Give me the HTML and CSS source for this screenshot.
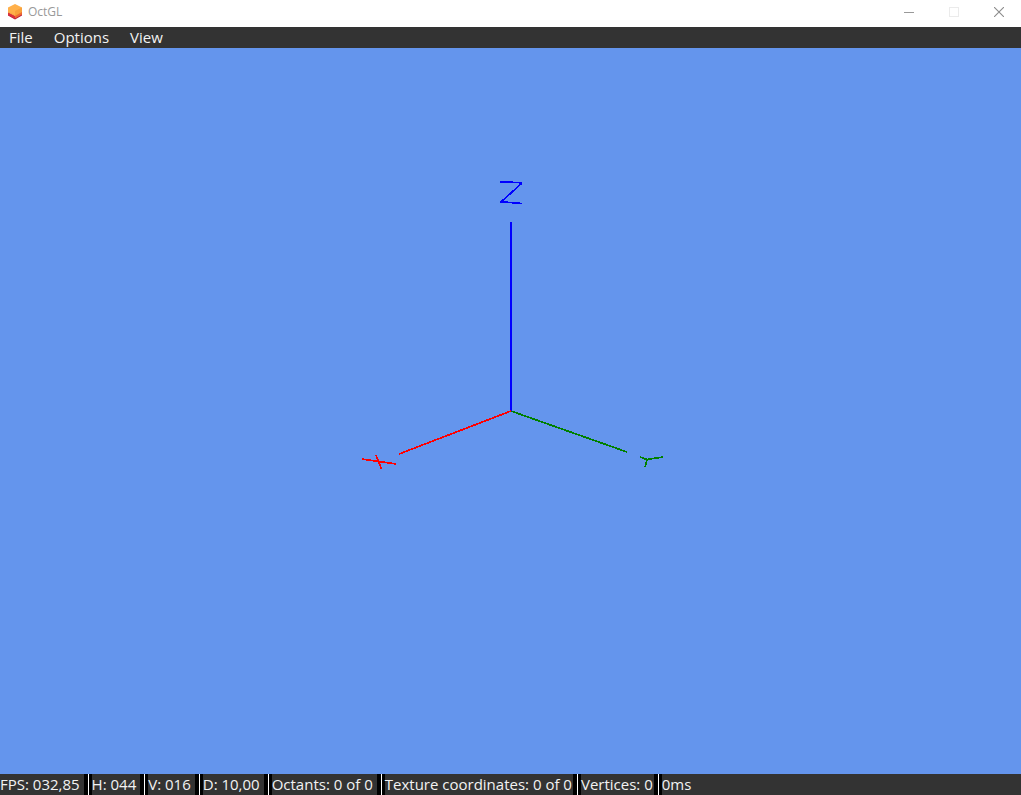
FILE: index.html
```html
<!DOCTYPE html>
<html lang="en">
<head>
<meta charset="utf-8">
<title>OctGL</title>
<link rel="stylesheet" href="styles.css">
</head>
<body>
<div class="window">
  <header class="titlebar">
    <svg class="logo" viewBox="0 0 16 16" aria-hidden="true">
      <path fill="#b8183c" d="M1 9l7 3.500 7-3.500v2.500L8 15.500l-7-4z"/>
      <path fill="#d92f3c" d="M1 8l7 3.500V15L1 11z"/>
      <path fill="#ee6a32" d="M8 11l7-4v3.500l-7 4z"/>
      <path fill="#f9a845" d="M1 4l7 3.500V12L1 8.500z"/>
      <path fill="#ffb04a" d="M8 0l7 3.500v4L8 11 1 7.500v-4z"/>
      <path fill="#f8a13c" d="M8 7l7-3.500V8l-7 4z"/>
    </svg>
    <h1 class="title">OctGL</h1>
    <div class="controls">
      <button class="control" type="button" aria-label="Minimize">
        <svg class="glyph" viewBox="0 0 10 10"><line x1="0" y1="5.500" x2="10" y2="5.500" stroke="#999"/></svg>
      </button>
      <button class="control" type="button" aria-label="Maximize" disabled>
        <svg class="glyph" viewBox="0 0 10 10"><rect x="0.500" y="0.500" width="9" height="9" fill="none" stroke="#ebebeb"/></svg>
      </button>
      <button class="control" type="button" aria-label="Close">
        <svg class="glyph" viewBox="0 0 10 10"><path d="M0 0l10 10M10 0L0 10" fill="none" stroke="#8c8c8c" stroke-width="1.100"/></svg>
      </button>
    </div>
  </header>
  <nav class="menubar">
    <button class="menu" type="button">File</button>
    <button class="menu" type="button">Options</button>
    <button class="menu" type="button">View</button>
  </nav>
  <main class="viewport">
    <svg class="scene" viewBox="0 0 304 460" role="img" aria-label="X, Y and Z axes">
      <g class="axis-y">
        <line x1="152" y1="230" x2="268" y2="271"/>
        <line x1="281" y1="276" x2="288" y2="278.500"/>
        <line x1="288" y1="278.500" x2="304" y2="276"/>
        <line x1="288" y1="278.500" x2="286" y2="286"/>
      </g>
      <g class="axis-z">
        <line class="shaft" x1="152" y1="230" x2="152" y2="41"/>
        <line x1="141" y1="0.700" x2="163" y2="1.800"/>
        <line x1="163" y1="2" x2="142" y2="21"/>
        <line x1="141" y1="20.700" x2="163" y2="22.500"/>
      </g>
      <g class="axis-x">
        <line x1="152" y1="230" x2="40" y2="273"/>
        <line x1="3" y1="278" x2="37" y2="283"/>
        <line x1="17" y1="274" x2="22.500" y2="288"/>
      </g>
    </svg>
  </main>
  <footer class="statusbar">
    <span class="status">FPS: 032,85</span><span class="divider"></span>
    <span class="status">H: 044</span><span class="divider"></span>
    <span class="status">V: 016</span><span class="divider"></span>
    <span class="status">D: 10,00</span><span class="divider"></span>
    <span class="status">Octants: 0 of 0</span><span class="divider"></span>
    <span class="status status-tight">Texture coordinates: 0 of 0</span><span class="divider"></span>
    <span class="status status-tight">Vertices: 0</span><span class="divider"></span>
    <span class="status">0ms</span>
  </footer>
</div>
</body>
</html>
```
FILE: styles.css
```css
* {
  box-sizing: border-box;
}

body {
  margin: 0;
  font-family: "Open Sans", "Noto Sans", sans-serif;
  font-size: 15px;
  color: #f2f2f2;
}

button {
  padding: 0;
  border: 0;
  background: none;
  color: inherit;
  font: inherit;
}

.window {
  display: flex;
  flex-direction: column;
  height: 100vh;
}

.titlebar {
  display: flex;
  align-items: center;
  height: 27px;
  padding: 0 0 4px 7px;
  background: #fff;
}

.logo {
  width: 16px;
  height: 16px;
}

.title {
  margin: 0 0 0 5px;
  font-size: 12px;
  font-weight: 400;
  line-height: 16px;
  color: #999;
}

.controls {
  display: flex;
  margin-left: auto;
}

.control {
  display: grid;
  place-items: center;
  width: 45px;
  height: 23px;
}

.glyph {
  width: 10px;
  height: 10px;
}

.menubar {
  display: flex;
  gap: 21px;
  height: 21px;
  padding: 0 9px;
  background: #333;
}

.menu {
  line-height: 21px;
}

.viewport {
  display: flex;
  flex: 1;
  min-height: 0;
  align-items: center;
  justify-content: center;
  background: #6495ed;
}

.scene {
  width: 304px;
  height: 460px;
  overflow: visible;
  shape-rendering: crispEdges;
  stroke-width: 1.7px;
}

.shaft {
  stroke-width: 2px;
}

.axis-x {
  stroke: #f00;
}

.axis-y {
  stroke: #008000;
}

.axis-z {
  stroke: #00f;
}

.statusbar {
  display: flex;
  height: 21px;
  background: #333;
  line-height: 21px;
  white-space: nowrap;
}

.status {
  padding-right: 4px;
}

.status-tight {
  padding-right: 1px;
}

.divider {
  width: 8px;
  border: solid #000;
  border-width: 0 3px 0 4px;
  background: #fff;
}
```
